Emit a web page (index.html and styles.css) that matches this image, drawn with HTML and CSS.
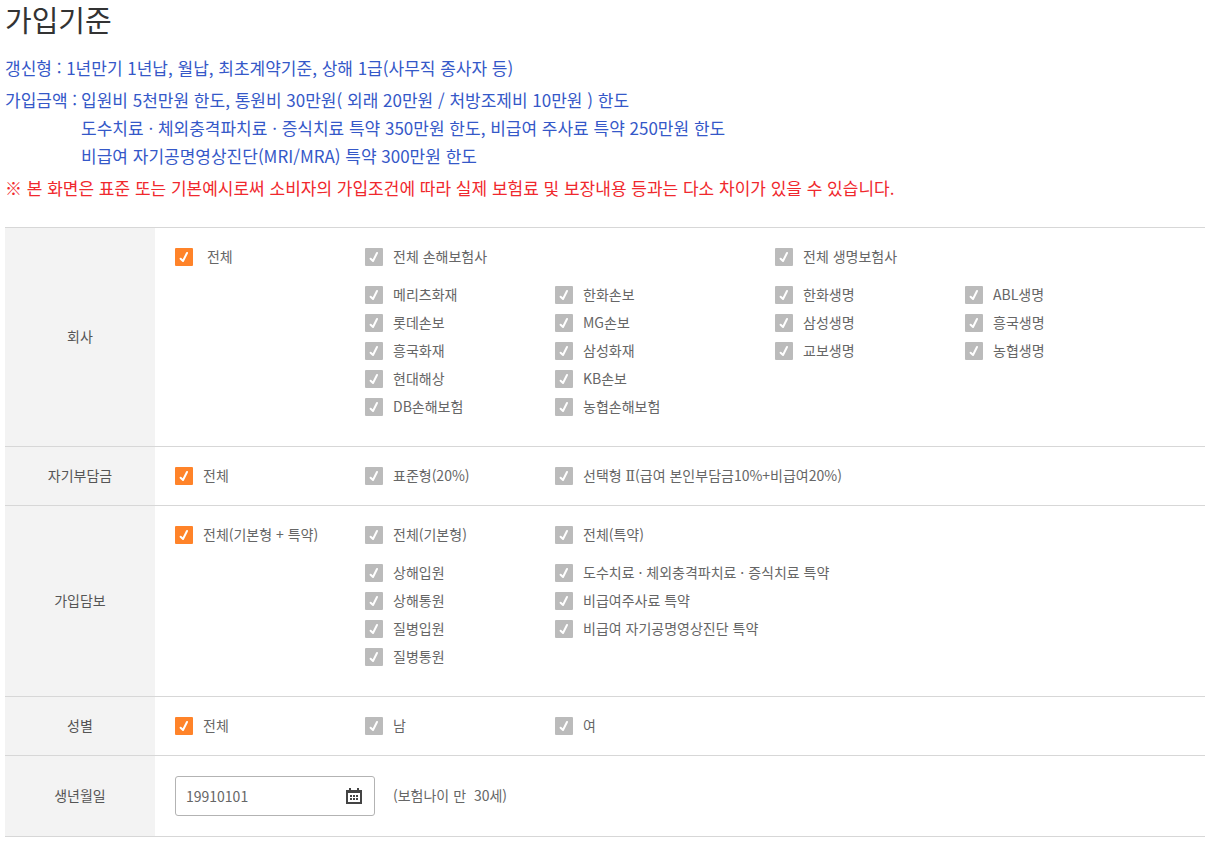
FILE: index.html
```html
<!DOCTYPE html>
<html lang="ko">
<head>
<meta charset="utf-8">
<meta name="viewport" content="width=device-width, initial-scale=1">
<title>가입기준</title>
<link rel="stylesheet" href="styles.css">
</head>
<body>
<main class="page">
  <h1 class="title">가입기준</h1>
  <div class="notes">
    <p>갱신형 : 1년만기 1년납, 월납, 최초계약기준, 상해 1급(사무직 종사자 등)</p>
    <div class="amount">
      <span>가입금액 :</span>
      <p>입원비 5천만원 한도, 통원비 30만원( 외래 20만원 / 처방조제비 10만원 ) 한도<br>
      도수치료 · 체외충격파치료 · 증식치료 특약 350만원 한도, 비급여 주사료 특약 250만원 한도<br>
      비급여 자기공명영상진단(MRI/MRA) 특약 300만원 한도</p>
    </div>
    <p class="warning">※ 본 화면은 표준 또는 기본예시로써 소비자의 가입조건에 따라 실제 보험료 및 보장내용 등과는 다소 차이가 있을 수 있습니다.</p>
  </div>

  <table class="criteria">
    <tbody>
      <tr>
        <th scope="row">회사</th>
        <td>
          <div class="groups">
            <div class="group">
              <label class="check all"><input type="checkbox" checked><span>&nbsp;전체</span></label>
            </div>
            <div class="group double">
              <label class="check"><input type="checkbox" checked><span>전체 손해보험사</span></label>
              <div class="items">
                <label class="check"><input type="checkbox" checked><span>메리츠화재</span></label>
                <label class="check"><input type="checkbox" checked><span>한화손보</span></label>
                <label class="check"><input type="checkbox" checked><span>롯데손보</span></label>
                <label class="check"><input type="checkbox" checked><span>MG손보</span></label>
                <label class="check"><input type="checkbox" checked><span>흥국화재</span></label>
                <label class="check"><input type="checkbox" checked><span>삼성화재</span></label>
                <label class="check"><input type="checkbox" checked><span>현대해상</span></label>
                <label class="check"><input type="checkbox" checked><span>KB손보</span></label>
                <label class="check"><input type="checkbox" checked><span>DB손해보험</span></label>
                <label class="check"><input type="checkbox" checked><span>농협손해보험</span></label>
              </div>
            </div>
            <div class="group double">
              <label class="check"><input type="checkbox" checked><span>전체 생명보험사</span></label>
              <div class="items">
                <label class="check"><input type="checkbox" checked><span>한화생명</span></label>
                <label class="check"><input type="checkbox" checked><span>ABL생명</span></label>
                <label class="check"><input type="checkbox" checked><span>삼성생명</span></label>
                <label class="check"><input type="checkbox" checked><span>흥국생명</span></label>
                <label class="check"><input type="checkbox" checked><span>교보생명</span></label>
                <label class="check"><input type="checkbox" checked><span>농협생명</span></label>
              </div>
            </div>
          </div>
        </td>
      </tr>
      <tr>
        <th scope="row">자기부담금</th>
        <td>
          <div class="groups">
            <div class="group"><label class="check all"><input type="checkbox" checked><span>전체</span></label></div>
            <div class="group"><label class="check"><input type="checkbox" checked><span>표준형(20%)</span></label></div>
            <div class="group double"><label class="check"><input type="checkbox" checked><span>선택형 <span class="numeral">Ⅱ</span>(급여 본인부담금10%+비급여20%)</span></label></div>
          </div>
        </td>
      </tr>
      <tr>
        <th scope="row">가입담보</th>
        <td>
          <div class="groups">
            <div class="group"><label class="check all"><input type="checkbox" checked><span>전체(기본형 + 특약)</span></label></div>
            <div class="group">
              <label class="check"><input type="checkbox" checked><span>전체(기본형)</span></label>
              <div class="items">
                <label class="check"><input type="checkbox" checked><span>상해입원</span></label>
                <label class="check"><input type="checkbox" checked><span>상해통원</span></label>
                <label class="check"><input type="checkbox" checked><span>질병입원</span></label>
                <label class="check"><input type="checkbox" checked><span>질병통원</span></label>
              </div>
            </div>
            <div class="group wide">
              <label class="check"><input type="checkbox" checked><span>전체(특약)</span></label>
              <div class="items">
                <label class="check"><input type="checkbox" checked><span>도수치료 · 체외충격파치료 · 증식치료 특약</span></label>
                <label class="check"><input type="checkbox" checked><span>비급여주사료 특약</span></label>
                <label class="check"><input type="checkbox" checked><span>비급여 자기공명영상진단 특약</span></label>
              </div>
            </div>
          </div>
        </td>
      </tr>
      <tr>
        <th scope="row">성별</th>
        <td>
          <div class="groups">
            <div class="group"><label class="check all"><input type="checkbox" checked><span>전체</span></label></div>
            <div class="group"><label class="check"><input type="checkbox" checked><span>남</span></label></div>
            <div class="group"><label class="check"><input type="checkbox" checked><span>여</span></label></div>
          </div>
        </td>
      </tr>
      <tr>
        <th scope="row"><label for="birth">생년월일</label></th>
        <td>
          <div class="birth">
            <div class="date-box">
              <input id="birth" type="text" value="19910101">
              <button type="button" aria-label="달력 열기">
                <svg width="16" height="16" viewBox="0 0 16 16" fill="#444" aria-hidden="true">
                  <path fill-rule="evenodd" d="M0 2H3V0H5V2H11V0H13V2H16V16H0ZM2 5V14H14V5Z"/>
                  <path d="M4 7h2v2H4zM7 7h2v2H7zM10 7h2v2h-2zM4 10h2v2H4zM7 10h2v2H7zM10 10h2v2h-2z"/>
                </svg>
              </button>
            </div>
            <span>(보험나이 만 &nbsp;30세)</span>
          </div>
        </td>
      </tr>
    </tbody>
  </table>
</main>
</body>
</html>
```

FILE: styles.css
```css
* {
  box-sizing: border-box;
}

body {
  margin: 0;
  background: #fff;
  color: #666;
  font: 14px/18px "Noto Sans CJK KR", "Noto Sans", sans-serif;
}

.page {
  padding: 0 5px 4px;
}

.title {
  margin: 0 0 16px;
  color: #333;
  font-size: 29px;
  font-weight: 400;
  line-height: 38px;
}

.notes {
  display: flex;
  flex-direction: column;
  gap: 4px;
  margin-bottom: 25px;
  color: #3558c8;
  font-size: 17px;
  line-height: 28px;
}

.notes p {
  margin: 0;
}

.amount {
  display: flex;
  gap: 4px;
}

.amount span {
  flex: none;
}

.notes .warning {
  color: #f0282d;
}

.criteria {
  width: 100%;
  border-collapse: separate;
  border-spacing: 0;
  border-top: 1px solid #d7d7d7;
}

.criteria th,
.criteria td {
  padding: 20px;
  border-bottom: 1px solid #d7d7d7;
}

.criteria th {
  width: 150px;
  padding: 19px 20px 21px;
  background: #f3f3f3;
  color: #555;
  font-weight: 400;
}

.criteria td {
  vertical-align: top;
}

.groups {
  display: flex;
  flex-wrap: wrap;
}

.group {
  width: 190px;
}

.group.double,
.group.wide {
  width: 410px;
}

.check {
  display: flex;
  align-items: center;
  gap: 10px;
  height: 18px;
  white-space: nowrap;
}

.check > span,
.birth > span {
  padding-bottom: 2px;
}

.check input {
  flex: none;
  width: 18px;
  height: 18px;
  margin: 0;
  appearance: none;
  border-radius: 1px;
  background-color: #bbb;
}

.check input:checked {
  background-image: url("data:image/svg+xml,%3Csvg xmlns='http://www.w3.org/2000/svg' viewBox='0 0 18 18'%3E%3Cpath d='M5.6 10.8 8 13 12 5' fill='none' stroke='white' stroke-width='2' stroke-linecap='round' stroke-linejoin='round'/%3E%3C/svg%3E");
}

.check.all input {
  background-color: #ff8329;
}

.numeral {
  font-family: "DejaVu Serif", serif;
  line-height: 1;
}

.items {
  display: grid;
  grid-template-columns: 190px;
  row-gap: 10px;
  padding: 20px 0 10px;
}

.double .items {
  grid-template-columns: 190px 190px;
}

.birth {
  display: flex;
  align-items: center;
  gap: 18px;
}

.date-box {
  display: flex;
  align-items: center;
  width: 200px;
  height: 40px;
  padding: 0 12px 0 10px;
  border: 1px solid #b3b3b3;
  border-radius: 3px;
}

.date-box input {
  flex: 1;
  min-width: 0;
  padding: 0;
  border: 0;
  background: none;
  color: #666;
  font: inherit;
}

.date-box button {
  display: flex;
  padding: 0;
  border: 0;
  background: none;
}
```
